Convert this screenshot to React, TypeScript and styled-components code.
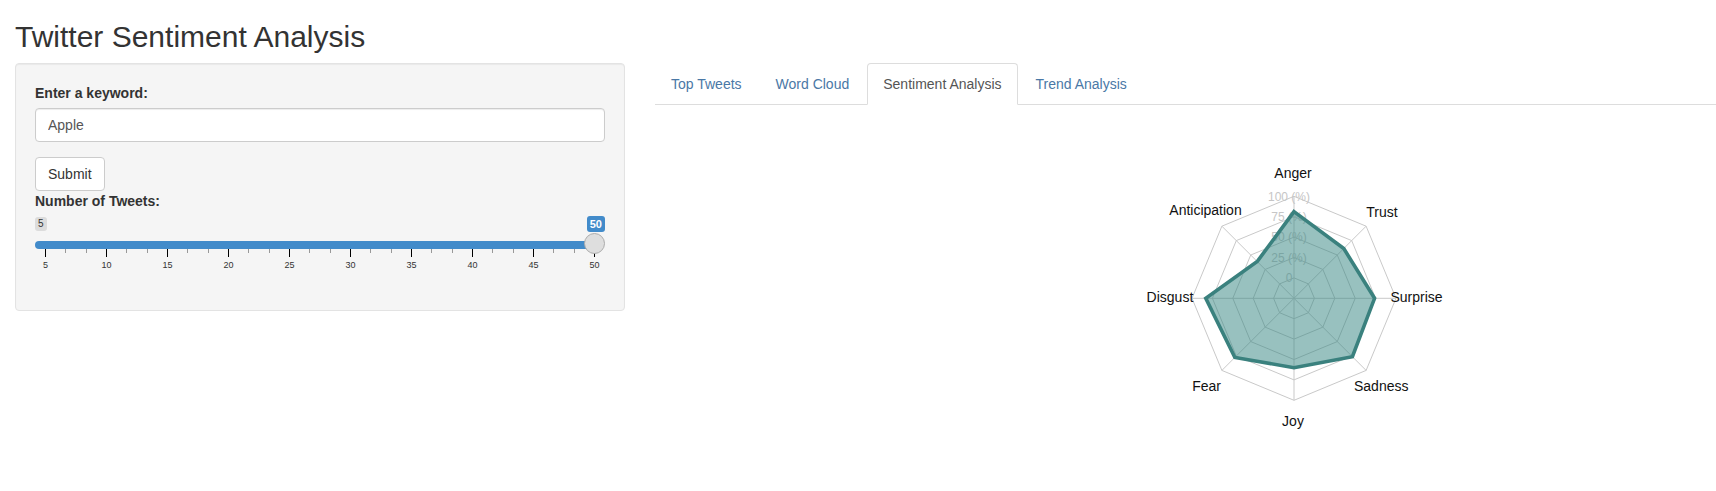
import React from "react";
import styled, { createGlobalStyle } from "styled-components";

const Global = createGlobalStyle`
  html, body { margin: 0; padding: 0; background: #fff; overflow: hidden; }
  body {
    font-family: "Liberation Sans", Arial, Helvetica, sans-serif;
    font-size: 14px;
    line-height: 1.42857;
    color: #333;
  }
  * { box-sizing: border-box; }
`;

const Container = styled.div`
  padding: 0 15px;
`;

const Title = styled.h2`
  font-size: 30px;
  font-weight: 500;
  line-height: 1.1;
  margin: 20px 0 10px;
`;

const Row = styled.div`
  display: flex;
  margin: 0 -15px;
`;

const Sidebar = styled.div`
  flex: 0 0 640px;
  padding: 0 15px;
`;

const Main = styled.div`
  flex: 1;
  padding: 0 0 0 15px;
  min-width: 0;
`;

const Well = styled.div`
  display: flex;
  flex-direction: column;
  align-items: stretch;
  background: #f5f5f5;
  border: 1px solid #e3e3e3;
  border-radius: 4px;
  box-shadow: inset 0 1px 1px rgba(0, 0, 0, 0.05);
  padding: 19px;
`;

const FormGroup = styled.div`
  display: flex;
  flex-direction: column;
  margin-bottom: 15px;
`;

const Label = styled.label`
  display: block;
  font-weight: 700;
  margin-bottom: 5px;
  line-height: 20px;
`;

const Input = styled.input`
  display: block;
  width: 100%;
  height: 34px;
  padding: 6px 12px;
  font-family: inherit;
  font-size: 14px;
  color: #555;
  background: #fff;
  border: 1px solid #ccc;
  border-radius: 4px;
  box-shadow: inset 0 1px 1px rgba(0, 0, 0, 0.075);
  outline: none;
`;

const Button = styled.button`
  align-self: flex-start;
  height: 34px;
  padding: 6px 12px;
  font-family: inherit;
  font-size: 14px;
  line-height: 20px;
  color: #333;
  background: #fff;
  border: 1px solid #ccc;
  border-radius: 4px;
`;

/* ---- range slider ---- */

const Irs = styled.div`
  display: flex;
  flex-direction: column;
  height: 60px;
`;

const EndLabels = styled.div`
  display: flex;
  justify-content: space-between;
  align-items: flex-start;
  height: 17px;
`;

const MinLabel = styled.span`
  margin-top: 1px;
  padding: 0 3px;
  font-size: 10px;
  line-height: 14px;
  color: #333;
  background: rgba(0, 0, 0, 0.1);
  border-radius: 3px;
`;

const MaxBadge = styled.span`
  position: relative;
  z-index: 2;
  padding: 0 3px;
  font-size: 11px;
  font-weight: 700;
  line-height: 16px;
  color: #fff;
  background: #428bca;
  border-radius: 3px;
`;

const Track = styled.div`
  position: relative;
  height: 16px;
  display: flex;
  align-items: flex-end;
`;

const Bar = styled.div`
  width: calc(100% - 6px);
  height: 8px;
  border-radius: 8px;
  background: #428bca;
`;

const Handle = styled.div`
  position: absolute;
  right: 0;
  top: 0;
  z-index: 1;
  width: 21px;
  height: 21px;
  border-radius: 50%;
  background: #dedede;
  border: 1px solid #ababab;
`;

const Ticks = styled.div`
  display: flex;
  justify-content: space-between;
  align-items: flex-start;
  height: 10px;
  margin: 0 10px;
`;

const Tick = styled.span<{ $major?: boolean }>`
  flex: 0 0 1px;
  height: ${(p) => (p.$major ? 8 : 4)}px;
  background: ${(p) => (p.$major ? "#000" : "#999")};
`;

const TickLabels = styled.div`
  display: flex;
  justify-content: space-between;
  margin: 0 10.5px;
`;

const TickLabel = styled.span`
  flex: 0 0 0;
  width: 0;
  min-width: 0;
  display: flex;
  justify-content: center;
  font-size: 9px;
  line-height: 12px;
  color: #333;
  white-space: nowrap;
`;

/* ---- tabs ---- */

const Tabs = styled.ul`
  display: flex;
  list-style: none;
  margin: 0;
  padding: 0;
  border-bottom: 1px solid #ddd;
`;

const TabItem = styled.li`
  margin-bottom: -1px;
  margin-right: 2px;
`;

const TabLink = styled.a<{ $active?: boolean }>`
  display: block;
  padding: 10px 15px;
  line-height: 20px;
  text-decoration: none;
  border: 1px solid ${(p) => (p.$active ? "#ddd" : "transparent")};
  border-bottom-color: transparent;
  border-radius: 4px 4px 0 0;
  background: ${(p) => (p.$active ? "#fff" : "transparent")};
  color: ${(p) => (p.$active ? "#555" : "#4a78a6")};
  cursor: pointer;
`;

const Chart = styled.svg`
  display: block;
  width: 100%;
  height: 380px;
`;

const tabs = ["Top Tweets", "Word Cloud", "Sentiment Analysis", "Trend Analysis"];

const CX = 639;
const CY = 193.3;
const R = 102;

const axes = [
  { name: "Anger", v: 0.85, lx: 638, ly: 68, anchor: "middle" },
  { name: "Trust", v: 0.69, lx: 727, ly: 106.7, anchor: "middle" },
  { name: "Surprise", v: 0.79, lx: 735.5, ly: 191.7, anchor: "start" },
  { name: "Sadness", v: 0.81, lx: 699, ly: 281, anchor: "start" },
  { name: "Joy", v: 0.68, lx: 638, ly: 316, anchor: "middle" },
  { name: "Fear", v: 0.82, lx: 566, ly: 281, anchor: "end" },
  { name: "Disgust", v: 0.865, lx: 538.3, ly: 192, anchor: "end" },
  { name: "Anticipation", v: 0.51, lx: 586.7, ly: 105, anchor: "end" },
];

const pt = (i: number, r: number) => {
  const a = (-90 + i * 45) * (Math.PI / 180);
  return [CX + r * Math.cos(a), CY + r * Math.sin(a)];
};

const ringPath = (r: number) =>
  axes.map((_, i) => pt(i, r).map((n) => n.toFixed(2)).join(",")).join(" ");

const ringLabels = ["0", "25 (%)", "50 (%)", "75 (%)", "100 (%)"];

function Radar() {
  const dataPts = axes
    .map((a, i) => pt(i, a.v * R).map((n) => n.toFixed(2)).join(","))
    .join(" ");
  return (
    <Chart>
      {[1, 2, 3, 4, 5].map((k) => (
        <polygon key={k} points={ringPath((R * k) / 5)} fill="none" stroke="#c9c9c9" strokeWidth={1} />
      ))}
      {axes.map((_, i) => {
        const [x, y] = pt(i, R);
        return <line key={i} x1={CX} y1={CY} x2={x} y2={y} stroke="#c9c9c9" strokeWidth={1} />;
      })}
      {ringLabels.map((t, k) => (
        <text
          key={t}
          x={CX - 5}
          y={CY - (R * (k + 1)) / 5 + 4.3}
          textAnchor="middle"
          fontSize={12}
          fill="#c6c6c6"
          fontFamily="Liberation Sans, Arial, sans-serif"
        >
          {t}
        </text>
      ))}
      <polygon
        points={dataPts}
        fill="rgba(49,131,128,0.5)"
        stroke="#3a817e"
        strokeWidth={3.6}
        strokeLinejoin="miter"
      />
      {axes.map((a) => (
        <text
          key={a.name}
          x={a.lx}
          y={a.ly + 5}
          textAnchor={a.anchor as "start" | "middle" | "end"}
          fontSize={14}
          fill="#111"
          fontFamily="Liberation Sans, Arial, sans-serif"
        >
          {a.name}
        </text>
      ))}
    </Chart>
  );
}

const tickValues = [5, 10, 15, 20, 25, 30, 35, 40, 45, 50];

function Slider() {
  const ticks = Array.from({ length: 28 }, (_, i) => <Tick key={i} $major={i % 3 === 0} />);
  return (
    <Irs>
      <EndLabels>
        <MinLabel>5</MinLabel>
        <MaxBadge>50</MaxBadge>
      </EndLabels>
      <Track>
        <Bar />
        <Handle />
      </Track>
      <Ticks>{ticks}</Ticks>
      <TickLabels>
        {tickValues.map((v) => (
          <TickLabel key={v}>{v}</TickLabel>
        ))}
      </TickLabels>
    </Irs>
  );
}

export default function App() {
  return (
    <>
      <Global />
      <Container>
        <Title>Twitter Sentiment Analysis</Title>
        <Row>
          <Sidebar>
            <Well>
              <FormGroup>
                <Label>Enter a keyword:</Label>
                <Input defaultValue="Apple" />
              </FormGroup>
              <Button>Submit</Button>
              <FormGroup>
                <Label>Number of Tweets:</Label>
                <Slider />
              </FormGroup>
            </Well>
          </Sidebar>
          <Main>
            <Tabs>
              {tabs.map((t) => (
                <TabItem key={t}>
                  <TabLink $active={t === "Sentiment Analysis"}>{t}</TabLink>
                </TabItem>
              ))}
            </Tabs>
            <Radar />
          </Main>
        </Row>
      </Container>
    </>
  );
}
